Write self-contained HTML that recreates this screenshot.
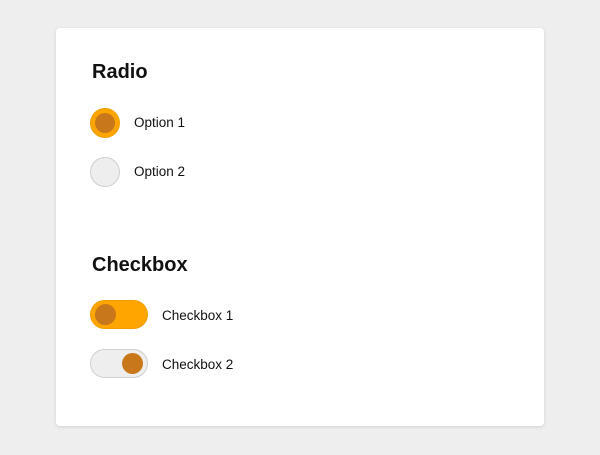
<!DOCTYPE html>
<html><head><style>
body{margin:0;width:600px;height:455px;background:#eeeeee;font-family:"Liberation Sans",sans-serif;position:relative;overflow:hidden}
.card{position:absolute;left:56px;top:28px;width:488px;height:398px;background:#fff;border-radius:4px;box-shadow:0 1px 3px rgba(0,0,0,.12)}
.h{position:absolute;left:92px;font-size:20px;font-weight:bold;color:#111}
.t{position:absolute;font-size:13.5px;color:#111}
.r{position:absolute;left:90px;width:30px;height:30px;border-radius:50%;box-sizing:border-box}
.on{background:#ffa500;border:1px solid #f0a000}
.on::after{content:"";position:absolute;left:4px;top:4px;width:20px;height:20px;border-radius:50%;background:#c8781a}
.off{background:#eeeeee;border:1px solid #cfcfcf}
.tg{position:absolute;left:90px;width:58px;height:29px;border-radius:15px;box-sizing:border-box}
.k{position:absolute;top:3px;width:21px;height:21px;border-radius:50%;background:#c8781a}
</style></head><body>
<div class="card"></div>
<div class="h" style="top:61px">Radio</div>
<div class="r on" style="top:108px"></div>
<div class="t" style="left:134px;top:115px">Option 1</div>
<div class="r off" style="top:157px"></div>
<div class="t" style="left:134px;top:164px">Option 2</div>
<div class="h" style="top:254px">Checkbox</div>
<div class="tg on" style="top:300px;background:#ffa500;border:1px solid #f0a000"><div class="k" style="left:4px"></div></div>
<div class="t" style="left:162px;top:308px">Checkbox 1</div>
<div class="tg off" style="top:349px"><div class="k" style="left:31px"></div></div>
<div class="t" style="left:162px;top:357px">Checkbox 2</div>
</body></html>
